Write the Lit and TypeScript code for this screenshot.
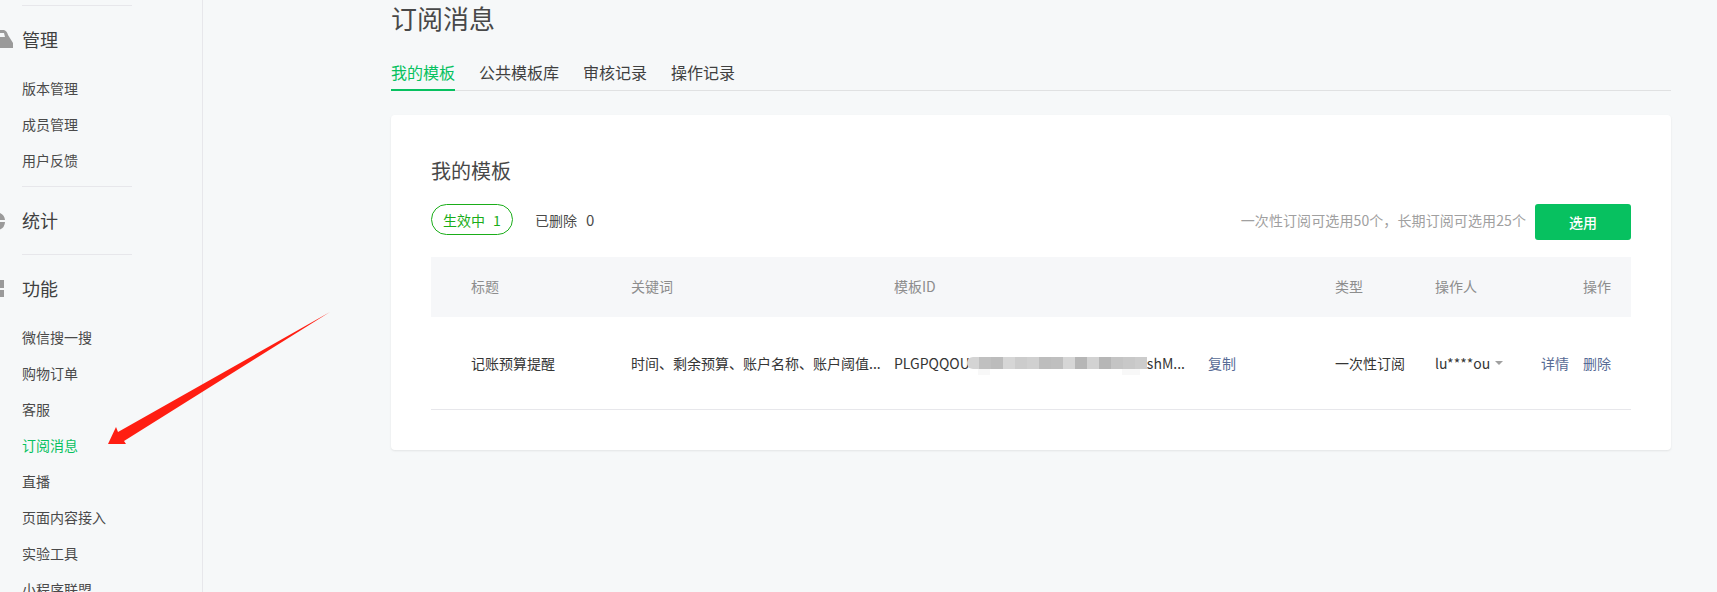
import { LitElement, html, css, svg } from "lit";
import { customElement } from "lit/decorators.js";

const mosaic = ["#d4d4d4","#c0c0c0","#bcbcbc","#d6d6d6","#cccccc","#d0d0d0","#bdbdbd","#bfbfbf","#d6d6d6","#b6b6b6","#d2d2d2","#b6b6b6","#c4c4c4","#c8c8c8","#cccccc"];

@customElement("app-root")
export class AppRoot extends LitElement {
  static styles = css`
    :host { display: block; position: relative; width: 1717px; height: 592px; overflow: hidden; background: #f6f8f9; font-family: "Noto Sans CJK SC", "Liberation Sans", sans-serif; color: #404040; }
    .page { display: flex; height: 592px; }
    .side { width: 203px; flex: none; box-sizing: border-box; border-right: 1px solid #e7e7eb; padding: 5px 0 0 22px; height: 592px; overflow: hidden; }
    .div { width: 110px; height: 1px; background: #e7e7eb; }
    .group { display: flex; align-items: center; height: 67px; box-sizing: border-box; padding-bottom: 2px; position: relative; font-size: 18px; color: #404040; }
    .ic { position: absolute; left: -22px; top: 22px; width: 22px; height: 24px; }
    .items { display: flex; flex-direction: column; margin-bottom: 7px; margin-top: -2px; }
    .item { font-size: 14px; height: 36px; line-height: 34px; color: #4a4a4a; white-space: nowrap; }
    .item.on { color: #07c160; }
    .main { flex: 1; padding: 0 46px 0 188px; min-width: 0; }
    h1 { margin: 0; font-size: 26px; font-weight: 400; line-height: 36px; color: #484848; }
    .tabs { display: flex; gap: 24px; margin-top: 18px; border-bottom: 1px solid #e0e1e2; height: 36px; }
    .tab { font-size: 16px; line-height: 36px; height: 35px; color: #404040; }
    .tab.on { color: #07c160; border-bottom: 2px solid #07c160; height: 35px; }
    .card { margin-top: 24px; background: #fff; border-radius: 4px; box-shadow: 0 1px 2px rgba(150,150,150,.2); padding: 40px; height: 335px; box-sizing: border-box; }
    h2 { margin: 0; font-size: 20px; font-weight: 400; line-height: 32px; color: #484848; }
    .bar { display: flex; align-items: flex-start; margin-top: 17px; }
    .pill { box-sizing: border-box; width: 82px; height: 31px; border: 1px solid #1aad19; border-radius: 16px; color: #1aad19; font-size: 14px; display: flex; align-items: center; justify-content: center; gap: 8px; }
    .del { margin-left: 22px; height: 31px; font-size: 14px; display: flex; align-items: center; gap: 9px; color: #4a4a4a; }
    .count { font-size: 15px; }
    .note { margin-left: auto; font-size: 14px; color: #a0a0a0; line-height: 32px; letter-spacing: 0.1px; }
    .btn { margin-left: 9px; width: 96px; height: 36px; border-radius: 3px; background: #07c160; color: #fff; font-size: 14px; font-weight: 500; display: flex; align-items: center; justify-content: center; }
    .grid { display: grid; grid-template-columns: 160px 263px 441px 100px 1fr; padding: 0 20px 0 40px; font-size: 14px; align-items: center; }
    .head { margin-top: 17px; height: 60px; background: #f6f7f9; color: #8d8d8d; padding-bottom: 2px; box-sizing: border-box; }
    .row { height: 93px; border-bottom: 1px solid #e7e7eb; box-sizing: border-box; color: #353535; }
    .last { display: flex; justify-content: space-between; }
    .link { color: #576b95; }
    .idc { display: flex; align-items: center; white-space: nowrap; }
    .mos { position: relative; display: flex; width: 180px; height: 12px; margin-left: -3px; flex: none; }
    .mos span { flex: 1; }
    .mos span:first-child { border-radius: 6px 0 0 6px; }
    .mos span:last-child { border-radius: 0 6px 6px 0; }
    .mos i { position: absolute; top: 12px; height: 6px; background: #f8f8f8; }
    .p1 { left: 11px; width: 12px; }
    .p2 { left: 155px; width: 18px; }
    .copy { margin-left: 23px; }
    .who { display: flex; align-items: center; gap: 5px; }
    .caret { width: 0; height: 0; border: 4px solid transparent; border-top: 4px solid #a0a0a0; border-bottom: 0; }
    .ops { display: flex; gap: 14px; }
    .arrow { position: absolute; left: 0; top: 0; pointer-events: none; }
  `;

  private group(t: string, ic: unknown) {
    return html`<div class="group"><svg class="ic" viewBox="0 0 22 24">${ic}</svg>${t}</div>`;
  }

  render() {
    const lock = svg`<path fill="#9a9a9a" d="M0 2 H4 Q7 3 8 7 L13 15 V20 H0 V9 H5 L4 5 H0Z"/>`;
    const pie = svg`<path fill="#9a9a9a" d="M0 4 A8.5 8.5 0 0 1 5 11 H0Z M0 13 H5 A8.5 8.5 0 0 1 0 20.500Z"/>`;
    const grid = svg`<path fill="#9a9a9a" d="M0 3h4v8H0z M0 13h4v7H0z"/>`;
    return html`
      <div class="page">
        <aside class="side">
          <div class="div"></div>
          ${this.group("管理", lock)}
          <div class="items">
            <div class="item">版本管理</div><div class="item">成员管理</div><div class="item">用户反馈</div>
          </div>
          <div class="div"></div>
          ${this.group("统计", pie)}
          <div class="div"></div>
          ${this.group("功能", grid)}
          <div class="items">
            ${["微信搜一搜","购物订单","客服","订阅消息","直播","页面内容接入","实验工具","小程序联盟"].map(
              (t) => html`<div class="item ${t === "订阅消息" ? "on" : ""}">${t}</div>`)}
          </div>
        </aside>
        <main class="main">
          <h1>订阅消息</h1>
          <div class="tabs">
            <div class="tab on">我的模板</div><div class="tab">公共模板库</div><div class="tab">审核记录</div><div class="tab">操作记录</div>
          </div>
          <section class="card">
            <h2>我的模板</h2>
            <div class="bar">
              <div class="pill"><span>生效中</span><span>1</span></div>
              <div class="del"><span>已删除</span><span class="count">0</span></div>
              <div class="note">一次性订阅可选用50个，长期订阅可选用25个</div>
              <div class="btn">选用</div>
            </div>
            <div class="grid head">
              <div>标题</div><div>关键词</div><div>模板ID</div><div>类型</div>
              <div class="last"><span>操作人</span><span>操作</span></div>
            </div>
            <div class="grid row">
              <div>记账预算提醒</div>
              <div>时间、剩余预算、账户名称、账户阈值...</div>
              <div class="idc">
                <span>PLGPQQOU</span>
                <span class="mos">${mosaic.map((c) => html`<span style="background:${c}"></span>`)}<i class="p1"></i><i class="p2"></i></span>
                <span>shM...</span>
                <span class="link copy">复制</span>
              </div>
              <div>一次性订阅</div>
              <div class="last">
                <span class="who">lu****ou<i class="caret"></i></span>
                <span class="ops"><span class="link">详情</span><span class="link">删除</span></span>
              </div>
            </div>
          </section>
        </main>
      </div>
      <svg class="arrow" width="400" height="592" viewBox="0 0 400 592">
        <polygon fill="#ff1e12" points="108,444 116,427 118,432 330,312 124,441 126,444"/>
      </svg>
    `;
  }
}
